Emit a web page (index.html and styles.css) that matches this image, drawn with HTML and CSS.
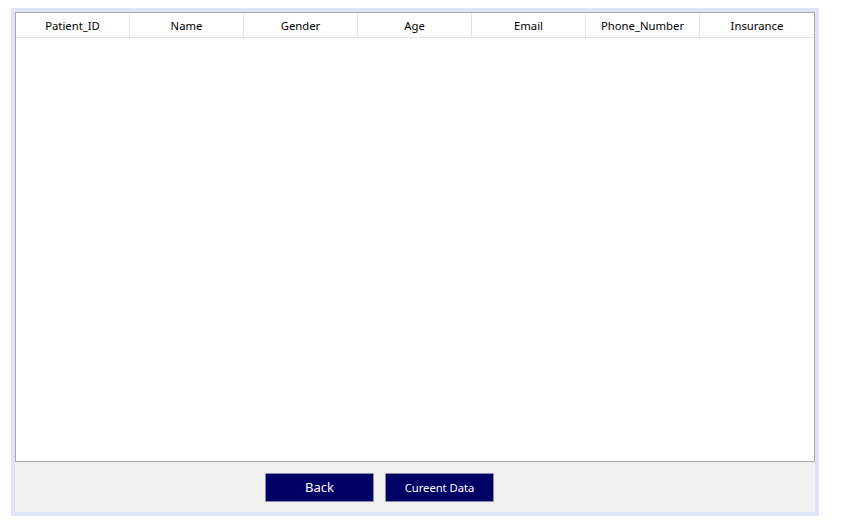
FILE: index.html
```html
<!DOCTYPE html>
<html>
<head>
<meta charset="utf-8">
<link rel="stylesheet" href="styles.css">
</head>
<body>
<div class="frame">
  <div class="grid">
    <div class="header">
      <div class="col">Patient_ID</div>
      <div class="col">Name</div>
      <div class="col">Gender</div>
      <div class="col">Age</div>
      <div class="col">Email</div>
      <div class="col">Phone_Number</div>
      <div class="col">Insurance</div>
    </div>
  </div>
  <div class="actions">
    <button class="btn btn-back">Back</button>
    <button class="btn btn-data">Cureent Data</button>
  </div>
</div>
</body>
</html>
```

FILE: styles.css
```css
html, body {
  margin: 0;
  padding: 0;
  background: #ffffff;
  font-family: "Noto Sans", "Open Sans", "DejaVu Sans", sans-serif;
}
.frame {
  margin: 8px 0 0 11px;
  width: 800px;
  border: 4px solid #e2e2fa;
  background: #f0f0f0;
}
.grid {
  height: 448px;
  border: 1px solid #a9a9a9;
  background: #ffffff;
}
.header {
  display: grid;
  grid-template-columns: repeat(7, 114px);
  height: 24px;
  border-bottom: 1px solid #e5e5e5;
}
.col {
  border-right: 1px solid #e5e5e5;
  display: flex;
  align-items: center;
  justify-content: center;
  font-size: 11.3px;
  color: #000;
  padding-top: 1px;
}
.col:last-child {
  border-right: none;
}
.actions {
  height: 50px;
  display: flex;
  align-items: center;
  gap: 11px;
  padding-left: 250px;
}
.btn {
  width: 109px;
  height: 29px;
  background: #000066;
  color: #ffffff;
  border: 1px solid #8a8aa8;
  border-radius: 1px;
  font-family: "Noto Sans", "Open Sans", "DejaVu Sans", sans-serif;
  padding: 0;
}
.btn-back {
  font-size: 13px;
}
.btn-data {
  font-size: 11.2px;
}
```
